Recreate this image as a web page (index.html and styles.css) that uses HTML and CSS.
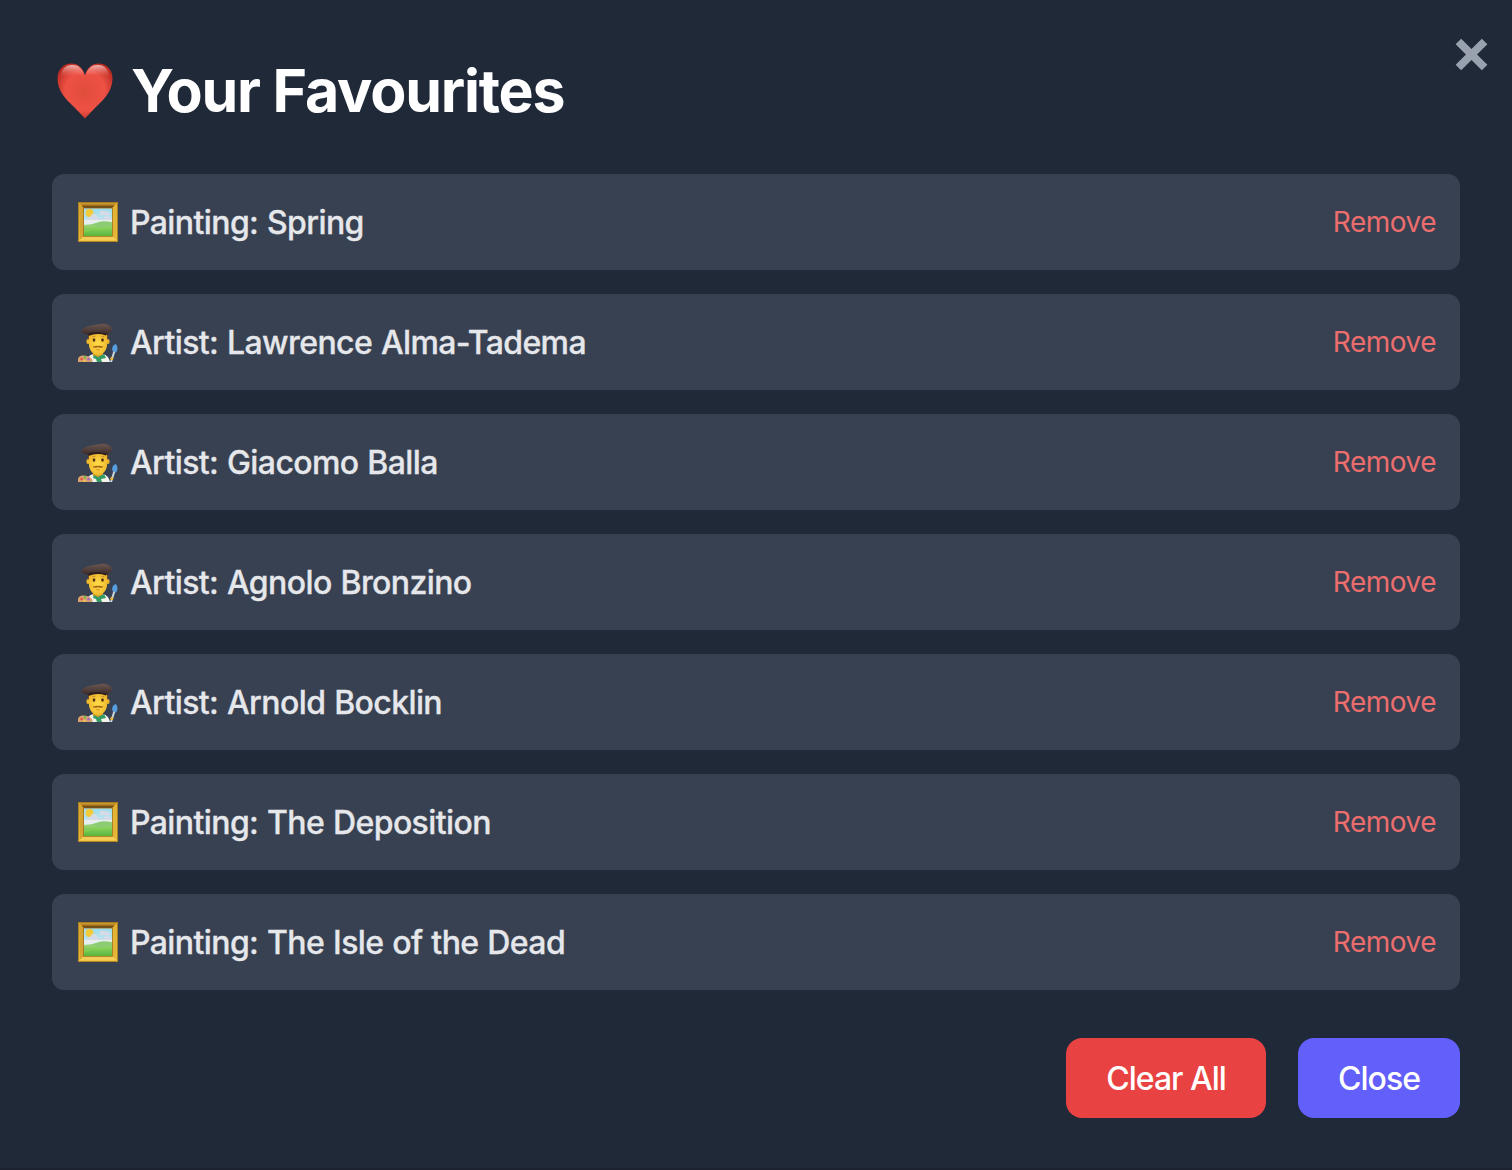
FILE: index.html
```html
<!DOCTYPE html>
<html lang="en">
<head>
<meta charset="utf-8">
<title>Your Favourites</title>
<link rel="stylesheet" href="styles.css">
</head>
<body>
<svg class="defs" aria-hidden="true">
  <defs>
    <radialGradient id="heart-fill" cx=".5" cy=".5" r=".6">
      <stop offset="0" stop-color="#e04d3b"/><stop offset=".6" stop-color="#ee5145"/><stop offset="1" stop-color="#b5281f"/>
    </radialGradient>
    <linearGradient id="heart-shine" x1="0" y1="0" x2="0" y2="1">
      <stop offset="0" stop-color="#fff" stop-opacity=".65"/><stop offset="1" stop-color="#ff7a6c" stop-opacity="0"/>
    </linearGradient>
    <linearGradient id="gold" x1="0" y1="0" x2="0" y2="1">
      <stop offset="0" stop-color="#d9a62d"/><stop offset="1" stop-color="#f2c83f"/>
    </linearGradient>
    <linearGradient id="sky" x1="0" y1="0" x2="0" y2="1">
      <stop offset="0" stop-color="#9edcec"/><stop offset="1" stop-color="#e3eef5"/>
    </linearGradient>
    <linearGradient id="grass" x1="0" y1="0" x2="0" y2="1">
      <stop offset="0" stop-color="#9ad774"/><stop offset="1" stop-color="#5cb637"/>
    </linearGradient>
    <radialGradient id="skin" cx=".5" cy=".5" r=".6">
      <stop offset="0" stop-color="#ffdc4b"/><stop offset="1" stop-color="#f0b52a"/>
    </radialGradient>
    <linearGradient id="beret" x1="0" y1="0" x2="0" y2="1">
      <stop offset="0" stop-color="#6a5652"/><stop offset="1" stop-color="#3b2b29"/>
    </linearGradient>
  </defs>
  <symbol id="painting" viewBox="0 0 40 40">
    <path fill="url(#gold)" d="M0 0h40v40H0z"/>
    <path fill="#b98925" d="M1.500 1.500h37L34 5H6z"/>
    <path fill="#77501a" d="M4 3.500h32v3H4z"/>
    <path fill="#d5a32f" d="M1.500 2 6 6v28l-4.500 4z"/>
    <path fill="#e4b437" d="M38.500 2 34 6v28l4.500 4z"/>
    <path fill="#f3cd55" d="M6 34h28l4.500 4h-37z"/>
    <path fill="none" stroke="#946a20" d="M5.500 6v28.500h29V6M.5.500h39v39H.5z" stroke-width=".7"/>
    <path fill="url(#sky)" d="M6 6.500h28V34H6z"/>
    <circle cx="11.500" cy="11" r="4" fill="#f2cb3b"/>
    <path fill="#d6dbe8" d="M9 17q1-2 3-2 2-4 5-3 3 1 3 4 3 0 4 2l4-5 3 1 3 4v5H8zM22 10q2-3 4-1l5 1 2 3H21z"/>
    <path fill="#e8f0ef" d="M6 18h28v6H6z"/>
    <path fill="#8dcc73" d="M6 23q7 0 12-2 5-3 16-1v14H6z"/>
    <path fill="url(#grass)" d="M6 23q8-1 14 2 7 1 14-1v10H6z"/>
    <path fill="none" stroke="#7fd44c" stroke-width="1.200" d="M6 30q9-4 14-3t14-1"/>
  </symbol>
  <symbol id="artist" viewBox="0 0 40 40">
    <path fill="#f0f1ea" d="M8 39c1-5 4-8 9-8h6c5 0 8 3 9 8z"/>
    <path fill="#dfa01e" d="M15 27h10v6l-5 3-5-3z"/>
    <path fill="#4b3328" d="M10 10h20v7H10z"/>
    <ellipse cx="10" cy="18.500" rx="1.600" ry="2.600" fill="#efb52a"/>
    <ellipse cx="30" cy="18.500" rx="1.600" ry="2.600" fill="#efb52a"/>
    <path fill="url(#skin)" d="M10.800 12q9.200-3 18.400 0v8c0 7.500-4.200 12-9.200 12s-9.200-4.500-9.200-12z"/>
    <path fill="url(#beret)" d="M4 7C7 3 15 2 22 1c7-1 12 2 12 6-1 3-4 4-6 3.500-6-1-12-.5-17 1.500-5-1-8-2-7-5z"/>
    <path fill="#2e211f" d="M10 10.500q8-3 19 0l-1 2q-9-3-17.500.5z"/>
    <ellipse cx="16" cy="17" rx="1.300" ry="1.800" fill="#4b2d15"/>
    <ellipse cx="24.500" cy="17" rx="1.300" ry="1.800" fill="#4b2d15"/>
    <path fill="none" stroke="#b57f2d" stroke-width=".7" d="M14 14q2-1.200 3.500-.3M23 13.700q2-1.200 3.500.3"/>
    <path fill="#a76818" d="M20 23c2-.8 3 .8 5.500.2-1 2-4 2.100-5.500.7-1.500 1.400-4.500 1.300-5.500-.7 2.500.6 3.500-1 5.500-.2z"/>
    <path fill="none" stroke="#c57a20" stroke-width=".8" d="M18.500 26.500q1.500.7 3 0"/>
    <path fill="#359a63" d="m20 34 6-3 2 4-5 1 1 3h-5l-1-3-3-1 1-3z"/>
    <path fill="#d7a26c" d="M0 39q-1-6 5-6.500 6 0 9 3.500 1 2 0 3z"/>
    <circle cx="3.500" cy="36" r="1.300" fill="#ed5548"/><circle cx="7" cy="34.500" r="1.200" fill="#68b94c"/><circle cx="10.500" cy="36.200" r="1.200" fill="#a167d0"/><circle cx="6.500" cy="37.800" r="1" fill="#f0d44d"/>
    <path stroke="#c6d5df" stroke-width="2" d="m36.500 28-3.500 11"/>
    <path fill="#559fe0" d="M34.500 28c-1-3 0-5.500 3-7 2.500 2 2.500 6 .5 8.500z"/>
    <circle cx="33.800" cy="35.500" r="1.500" fill="#efb92c"/>
  </symbol>
</svg>
<main class="modal">
  <button class="dismiss" aria-label="Close dialog">
    <svg viewBox="0 0 32 32"><path d="M3.300 3.300 28.700 28.700M28.700 3.300 3.300 28.700"/></svg>
  </button>
  <h1 class="title">
    <svg class="heart" viewBox="0 0 56 56">
      <path fill="url(#heart-fill)" d="M28 55.500C26.500 54 22 49 16.500 43.500 7.500 35 .5 27 .5 15.500.5 6.500 6.500.5 14.500.5 21 .5 26 5 28 12.500 30 5 35 .5 41.500.5c8 0 14 6 14 15 0 11.500-7 19.500-16 28C34 49 29.500 54 28 55.500z"/>
      <path fill="url(#heart-shine)" d="M4 14C4 6 9 2 15 2c6 0 10 3 12 10-6-2-14 1-23 2zM29 12c2-7 6-10 12-10 6 0 11 4 11 12-9-1-17-4-23-2z"/>
    </svg>
    <span>Your Favourites</span>
  </h1>
  <ul class="list">
    <li class="item"><svg class="emoji"><use href="#painting"/></svg><span class="name">Painting: Spring</span><button class="remove">Remove</button></li>
    <li class="item"><svg class="emoji person"><use href="#artist"/></svg><span class="name">Artist: Lawrence Alma-Tadema</span><button class="remove">Remove</button></li>
    <li class="item"><svg class="emoji person"><use href="#artist"/></svg><span class="name">Artist: Giacomo Balla</span><button class="remove">Remove</button></li>
    <li class="item"><svg class="emoji person"><use href="#artist"/></svg><span class="name">Artist: Agnolo Bronzino</span><button class="remove">Remove</button></li>
    <li class="item"><svg class="emoji person"><use href="#artist"/></svg><span class="name">Artist: Arnold Bocklin</span><button class="remove">Remove</button></li>
    <li class="item"><svg class="emoji"><use href="#painting"/></svg><span class="name">Painting: The Deposition</span><button class="remove">Remove</button></li>
    <li class="item"><svg class="emoji"><use href="#painting"/></svg><span class="name">Painting: The Isle of the Dead</span><button class="remove">Remove</button></li>
  </ul>
  <div class="actions">
    <button class="btn btn-clear">Clear All</button>
    <button class="btn btn-close">Close</button>
  </div>
</main>
</body>
</html>
```
FILE: styles.css
```css
* { box-sizing: border-box; }
body { margin: 0; background: #202938; font-family: Inter, "Liberation Sans", sans-serif; }
button { border: 0; background: none; padding: 0; font: inherit; color: inherit; cursor: pointer; }
.defs { position: absolute; width: 0; height: 0; }
.modal { position: relative; height: 1170px; padding: 52px 52px 0; border-bottom: 2px solid #1b2331; }
.dismiss { position: absolute; top: 38px; right: 24px; width: 33px; height: 33px; }
.dismiss svg { display: block; width: 33px; height: 33px; fill: none; stroke: #99a1af; stroke-width: 7.6; }
.title { display: flex; align-items: center; gap: 18px; height: 78px; margin: 0 0 44px; padding-left: 5px; color: #fff; font-size: 59px; font-weight: 700; letter-spacing: -1.2px; line-height: 78px; }
.heart { width: 56px; height: 56px; }
.list { display: flex; flex-direction: column; gap: 24px; margin: 0; padding: 0; list-style: none; }
.item { display: flex; align-items: center; height: 96px; padding: 0 24px 0 26px; border-radius: 12px; background: #384151; }
.emoji { width: 40px; height: 40px; margin-right: 12px; }
.person { margin-top: 2px; }
.name { flex: 1; padding-top: 2px; color: #e5e7eb; font-size: 32px; font-weight: 500; letter-spacing: -0.6px; word-spacing: 0.9px; line-height: 48px; -webkit-text-stroke: 0.3px #e5e7eb; }
.remove { color: #eb6d6d; font-size: 28px; letter-spacing: -0.5px; line-height: 40px; }
.actions { display: flex; justify-content: flex-end; gap: 32px; margin-top: 48px; }
.btn { height: 80px; border-radius: 16px; color: #fff; font-size: 32px; font-weight: 500; letter-spacing: -1px; }
.btn-clear { width: 200px; background: #e84242; }
.btn-close { width: 162px; background: #625ffa; }
```
